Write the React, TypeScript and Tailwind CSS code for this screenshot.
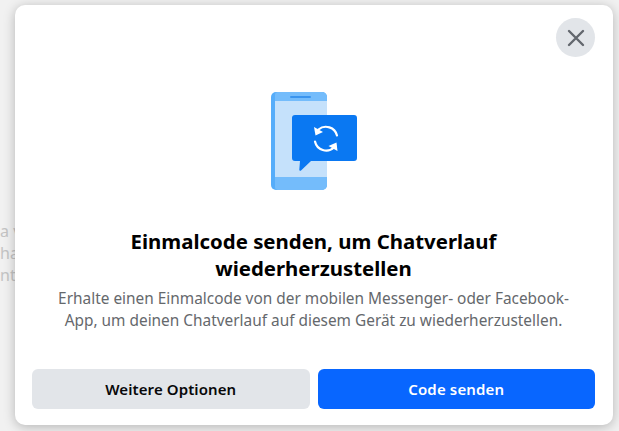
import { FC } from "react";

const font = "font-['Noto_Sans','Open_Sans',sans-serif]";

const PhoneIcon: FC = () => (
  <svg width="90" height="100" viewBox="0 0 90 100" fill="none">
    {/* phone body */}
    <rect x="1" y="1" width="56" height="98" rx="5" fill="#56adfa" />
    <rect x="5" y="10" width="52" height="76" fill="#c5e1fb" />
    <path d="M5 10V4a3 3 0 0 1 3-3h44a5 5 0 0 1 5 5v4z" fill="#74bcfb" />
    <path d="M5 86v10a3 3 0 0 0 3 3h44a5 5 0 0 0 5-5v-8z" fill="#74bcfb" />
    <rect x="20" y="5" width="21" height="2" rx="1" fill="#3a94ee" />
    {/* chat bubble */}
    <path
      d="M25 24h59a3 3 0 0 1 3 3v40a3 3 0 0 1-3 3H41L31 79.5a1 1 0 0 1-1.7-.8L30 70h-5a3 3 0 0 1-3-3V27a3 3 0 0 1 3-3z"
      fill="#0a78f2"
    />
    {/* refresh arrows */}
    <path d="M48.5 38.5a11.5 11.5 0 0 1 18.5 6" stroke="#fff" strokeWidth="2.2" strokeLinecap="round" />
    <path d="M64 56.5a11.5 11.5 0 0 1-19-6" stroke="#fff" strokeWidth="2.2" strokeLinecap="round" />
    <path d="M44 36l1.5 8.5 7.5-3.5z" fill="#fff" />
    <path d="M67.5 60l-1-8.5-8 3.5z" fill="#fff" />
  </svg>
);

const App: FC = () => {
  return (
    <div className={`relative h-[431px] w-[619px] overflow-hidden bg-[#f1f1f1] pl-[15px] pt-[5px] ${font}`}>
      {/* page text showing behind the dialog */}
      <div className="absolute left-0 top-[220px] w-[15px] overflow-hidden whitespace-nowrap text-[16px] leading-[22px] text-[#c4c4c4]">
        <p>a v</p>
        <p>ha</p>
        <p>ntw</p>
      </div>
      <div className="relative flex h-[420px] w-[598px] flex-col rounded-[10px] bg-white pb-4 pl-[17px] pr-[18px] pt-[13px] shadow-[0_2px_12px_rgba(0,0,0,0.25)]">
        <div className="flex justify-end">
          <button className="flex h-[39px] w-[39px] items-center justify-center rounded-full bg-[#e2e5e9]">
            <svg width="18" height="18" viewBox="0 0 18 18" fill="none">
              <path d="M2 2l14 14M16 2L2 16" stroke="#63676e" strokeWidth="2.4" strokeLinecap="round" />
            </svg>
          </button>
        </div>
        <div className="mt-[34px] flex justify-center pl-[2px]">
          <PhoneIcon />
        </div>
        <h2 className="mx-auto mt-[37px] w-[440px] text-center text-[20.4px] font-bold leading-[27px] text-black">
          Einmalcode senden, um Chatverlauf wiederherzustellen
        </h2>
        <p className="mx-auto mt-[6px] w-[530px] text-center text-[15.4px] leading-[22px] text-[#65686c]">
          Erhalte einen Einmalcode von der mobilen Messenger- oder Facebook-App, um deinen Chatverlauf auf diesem Gerät zu wiederherzustellen.
        </p>
        <div className="mt-auto flex gap-2">
          <button className="h-10 flex-1 rounded-md bg-[#e2e5e9] text-[15px] font-semibold tracking-[0.1px] text-[#080809]">
            Weitere Optionen
          </button>
          <button className="h-10 flex-1 rounded-md bg-[#0866ff] text-[15px] font-semibold tracking-[0.15px] text-white">
            Code senden
          </button>
        </div>
      </div>
    </div>
  );
};

export default App;
